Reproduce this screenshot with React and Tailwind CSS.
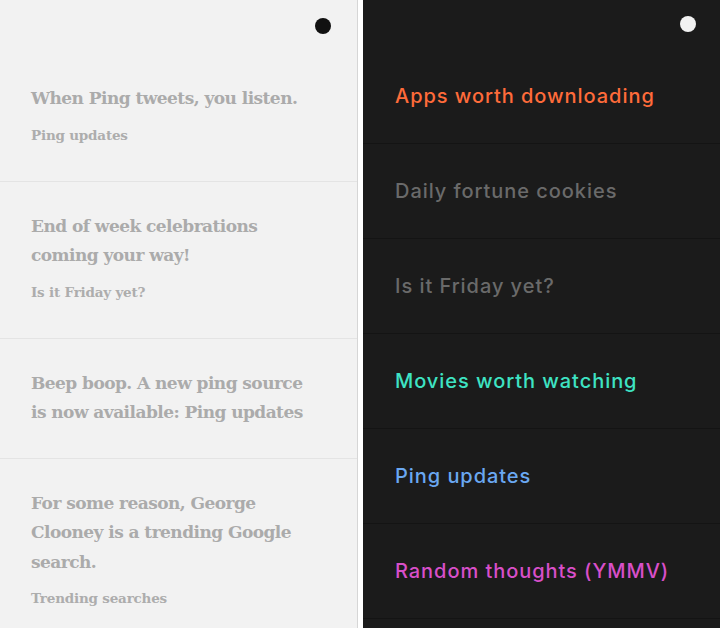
import React from "react";

const leftItems = [
  { title: ["When Ping tweets, you listen."], sub: "Ping updates" },
  { title: ["End of week celebrations", "coming your way!"], sub: "Is it Friday yet?" },
  { title: ["Beep boop. A new ping source", "is now available: Ping updates"], sub: null },
  { title: ["For some reason, George", "Clooney is a trending Google", "search."], sub: "Trending searches" },
];

const rightItems = [
  { label: "Apps worth downloading", color: "text-[#ff6b3a]" },
  { label: "Daily fortune cookies", color: "text-[#6a6a6a]" },
  { label: "Is it Friday yet?", color: "text-[#6a6a6a]" },
  { label: "Movies worth watching", color: "text-[#3ee3c3]" },
  { label: "Ping updates", color: "text-[#6aa8f2]" },
  { label: "Random thoughts (YMMV)", color: "text-[#d84fc9]" },
];

export default function App() {
  return (
    <div className="flex w-[720px] h-[628px] overflow-hidden">
      <div className="w-[358px] shrink-0 h-full bg-[#f2f2f2] border-r border-[#d6d6d6] flex flex-col" style={{ fontFamily: '"DejaVu Serif", serif' }}>
        <div className="h-[54px] shrink-0 flex justify-end pt-[18px] pr-[26px]">
          <div className="w-4 h-4 rounded-full bg-[#111111]" />
        </div>
        {leftItems.map((it, i) => (
          <div key={i} className={`px-[31px] py-[30px] ${i < leftItems.length - 1 ? "border-b border-[#e4e4e4]" : ""}`}>
            <div className="text-[17px] font-bold leading-[29.5px] text-[#ababab] tracking-[-0.55px]">
              {it.title.map((l, j) => (
                <div key={j}>{l}</div>
              ))}
            </div>
            {it.sub && (
              <div className="mt-[5px] text-[13.5px] font-bold leading-[32px] text-[#adadad] tracking-[-0.2px]">{it.sub}</div>
            )}
          </div>
        ))}
      </div>
      <div className="w-[5px] shrink-0 bg-white" />
      <div className="flex-1 h-full bg-[#1b1b1b] flex flex-col" style={{ fontFamily: 'Inter, sans-serif' }}>
        <div className="h-[49px] shrink-0 flex justify-end pt-[16px] pr-[24px]">
          <div className="w-4 h-4 rounded-full bg-[#f2f2f2]" />
        </div>
        {rightItems.map((it, i) => (
          <div key={i} className="h-[95px] shrink-0 flex items-center pl-[32px] border-b border-[#141414]">
            <span className={`text-[20px] font-medium tracking-[0.95px] ${it.color}`}>{it.label}</span>
          </div>
        ))}
      </div>
    </div>
  );
}
